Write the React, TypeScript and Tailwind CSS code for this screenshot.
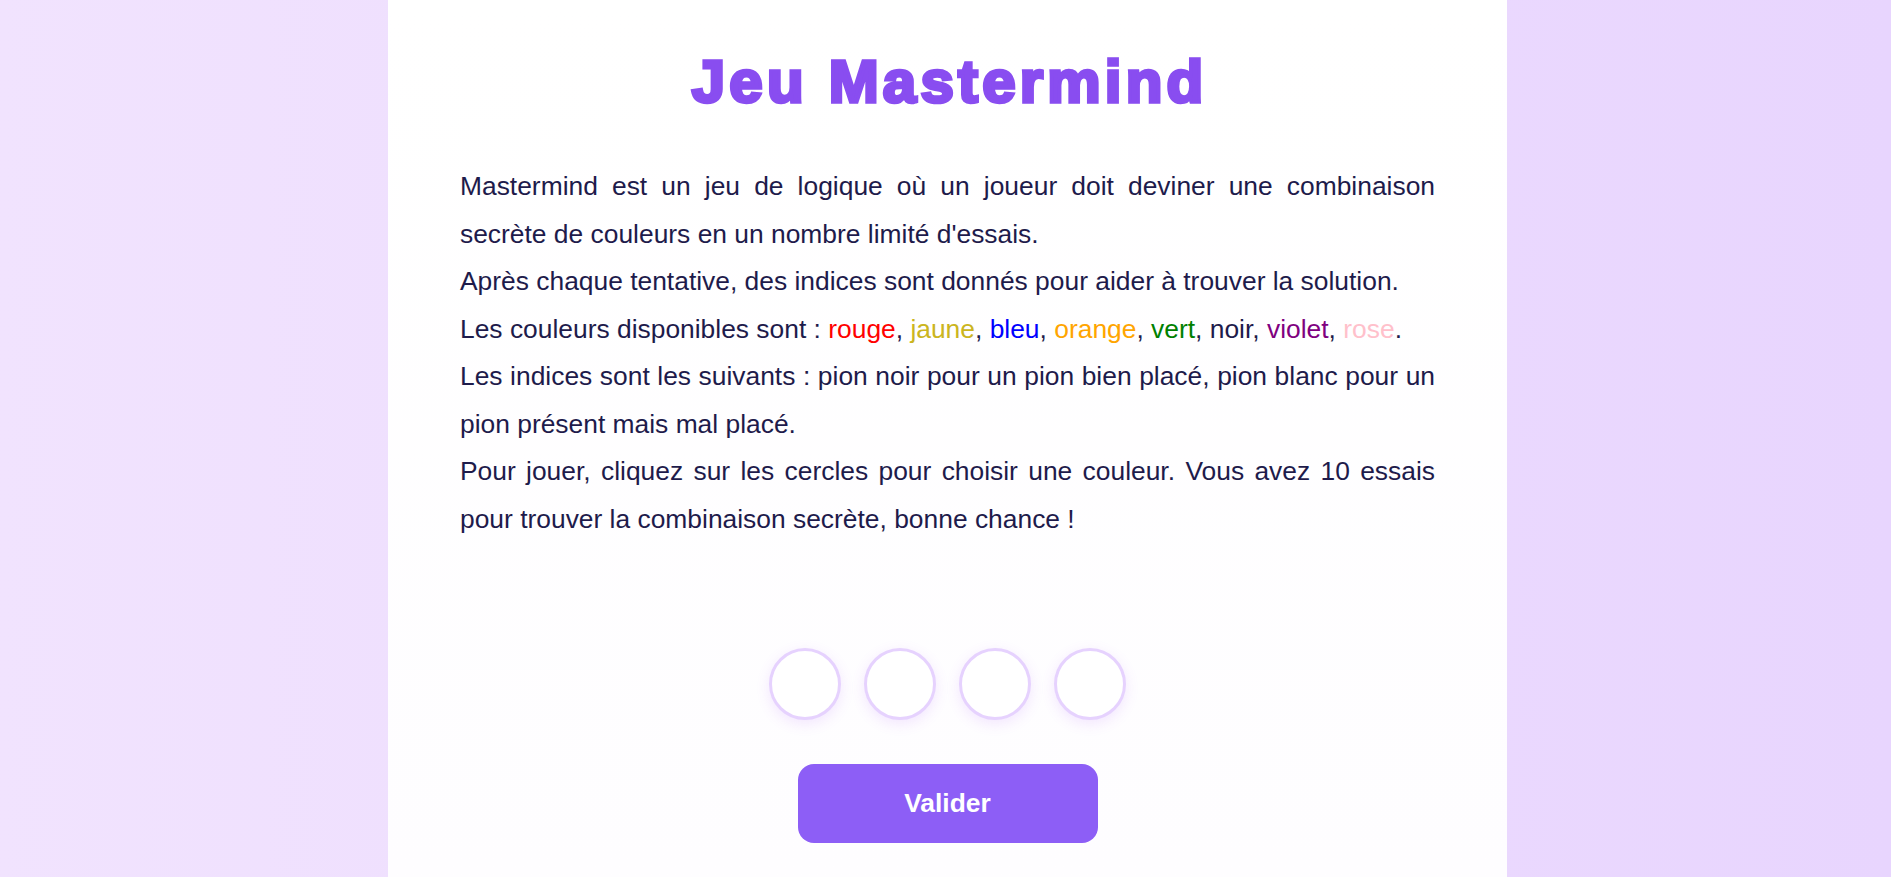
import React from 'react';

const couleurs: { nom: string; cls: string }[] = [
  { nom: 'rouge', cls: 'text-[#ff0000]' },
  { nom: 'jaune', cls: 'text-[#cbb520]' },
  { nom: 'bleu', cls: 'text-[#0000ff]' },
  { nom: 'orange', cls: 'text-[#ffa500]' },
  { nom: 'vert', cls: 'text-[#008000]' },
  { nom: 'noir', cls: '' },
  { nom: 'violet', cls: 'text-[#800080]' },
  { nom: 'rose', cls: 'text-[#ffc0cb]' },
];

export default function App() {
  return (
    <main className="min-h-screen flex justify-center pl-[4px] bg-gradient-to-r from-[#f1e3fe] via-[#eddcfe] to-[#e8d5fe] font-['Liberation_Sans',Arial,sans-serif]">
      <div className="w-[1119px] min-h-screen bg-gradient-to-b from-white to-[#fefdff] px-[72px] pt-[52px] pb-10">
        {/* Titre */}
        <h1 className="text-center text-[60px] leading-[60px] font-bold text-[#894df0] tracking-[4.2px] pl-[4.2px] [-webkit-text-stroke:3.5px_#894df0]">
          Jeu Mastermind
        </h1>

        {/* Règles */}
        <div className="mt-[51px] text-[26.4px] leading-[47.5px] text-[#1e1b4b] text-justify">
          <p>
            Mastermind est un jeu de logique où un joueur doit deviner une combinaison secrète de couleurs en un nombre
            limité d'essais.
          </p>
          <p>Après chaque tentative, des indices sont donnés pour aider à trouver la solution.</p>
          <p>
            Les couleurs disponibles sont :{' '}
            {couleurs.map((c, i) => (
              <React.Fragment key={c.nom}>
                <span className={c.cls}>{c.nom}</span>
                {i < couleurs.length - 1 ? ', ' : '.'}
              </React.Fragment>
            ))}
          </p>
          <p>
            Les indices sont les suivants : pion noir pour un pion bien placé, pion blanc pour un pion présent mais mal
            placé.
          </p>
          <p>
            Pour jouer, cliquez sur les cercles pour choisir une couleur. Vous avez 10 essais pour trouver la
            combinaison secrète, bonne chance !
          </p>
        </div>

        {/* Pions */}
        <div className="mt-[105px] flex justify-center gap-[23px]">
          {[0, 1, 2, 3].map((i) => (
            <button
              key={i}
              className="w-[72px] h-[72px] rounded-full bg-white border-[3px] border-[#e6d2fe] shadow-[0_4px_14px_rgba(168,85,247,0.14)]"
            />
          ))}
        </div>

        {/* Valider */}
        <div className="mt-[44px] flex justify-center">
          <button className="w-[300px] h-[79px] rounded-[16px] bg-[#8d5ef6] text-white text-[26.4px] font-bold">
            Valider
          </button>
        </div>
      </div>
    </main>
  );
}
